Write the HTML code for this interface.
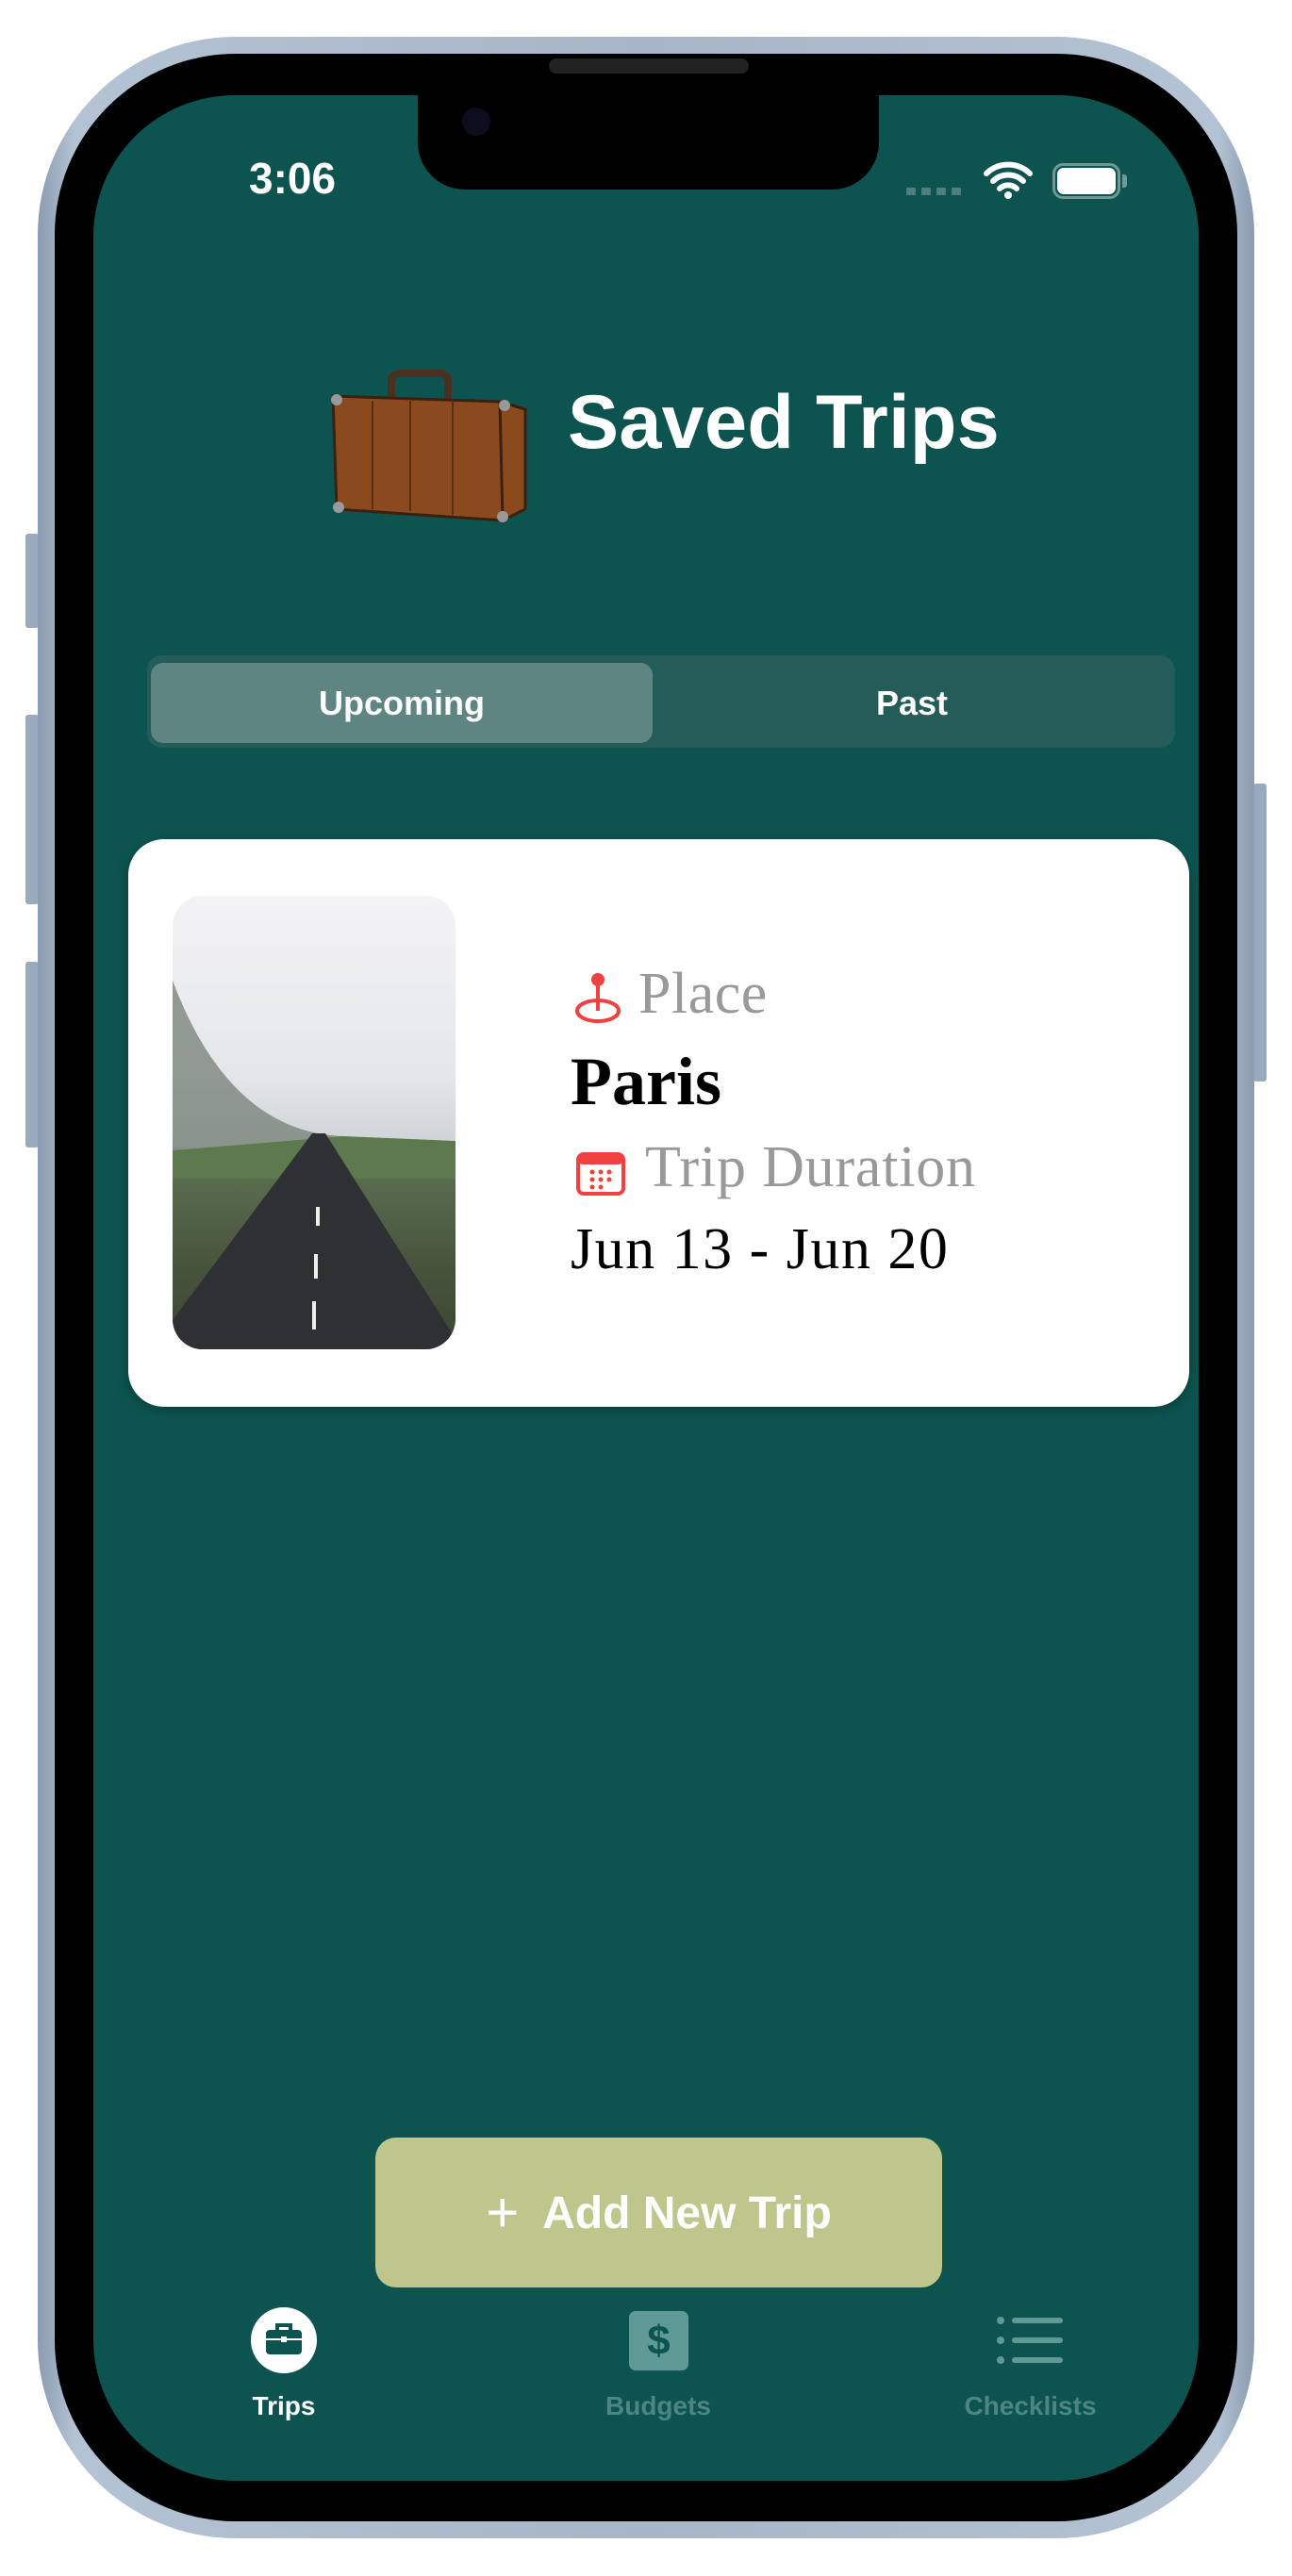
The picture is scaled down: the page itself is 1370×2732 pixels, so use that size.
<!DOCTYPE html>
<html><head><meta charset="utf-8"><style>
*{margin:0;padding:0;box-sizing:border-box}
body{width:1370px;height:2732px;background:#fff;position:relative;overflow:hidden;font-family:"Liberation Sans",sans-serif}
.abs{position:absolute}
.frame{left:40px;top:39px;width:1290px;height:2653px;border-radius:210px;background:linear-gradient(90deg,#8a9bb0,#b4c3d4 3%,#a6b5c7 50%,#b4c3d4 97%,#8a9bb0)}
.bezel{left:58px;top:57px;width:1254px;height:2617px;border-radius:192px;background:#000}
.screen{left:99px;top:101px;width:1172px;height:2530px;border-radius:150px;background:#0d5450;overflow:hidden}
.notch{left:443px;top:90px;width:489px;height:111px;background:#000;border-radius:0 0 50px 50px}
.btn{background:#9aaabd;border-radius:3px}
.serif{font-family:"Liberation Serif",serif}
</style></head><body>
<div class="abs btn" style="left:27px;top:566px;width:14px;height:100px"></div>
<div class="abs btn" style="left:27px;top:758px;width:14px;height:201px"></div>
<div class="abs btn" style="left:27px;top:1020px;width:14px;height:197px"></div>
<div class="abs btn" style="left:1329px;top:831px;width:14px;height:316px"></div>
<div class="abs frame"></div>
<div class="abs bezel"></div>
<div class="abs screen"></div>
<div class="abs notch"></div>
<div class="abs" style="left:582px;top:62px;width:212px;height:16px;border-radius:8px;background:#222"></div>
<div class="abs" style="left:490px;top:114px;width:30px;height:30px;border-radius:50%;background:#0d0d20"></div>
<div class="abs" style="left:264px;top:162px;font-size:46px;font-weight:bold;color:#fff">3:06</div>
<div class="abs" style="left:961px;top:199px;width:58px;height:8px;background:repeating-linear-gradient(90deg,#4f7f7c 0 10px,transparent 10px 16px)"></div>
<svg class="abs" style="left:1042px;top:168px" width="54" height="44" viewBox="0 0 54 44"><path d="M4 16a33 33 0 0 1 46 0M11 24a23 23 0 0 1 32 0M18 32a13 13 0 0 1 18 0" stroke="#fff" stroke-width="6" fill="none" stroke-linecap="round"/><circle cx="27" cy="39" r="4" fill="#fff"/></svg>
<div class="abs" style="left:1116px;top:173px;width:72px;height:38px;border:3px solid #6f9996;border-radius:11px"></div>
<div class="abs" style="left:1121px;top:178px;width:62px;height:28px;background:#fff;border-radius:7px"></div>
<div class="abs" style="left:1190px;top:185px;width:5px;height:14px;background:#6f9996;border-radius:0 3px 3px 0"></div>
<!-- suitcase -->
<svg class="abs" style="left:345px;top:390px" width="225" height="165" viewBox="0 0 225 165"><path d="M70 35 V14 q0-8 10-8 h40 q10 0 10 8 V35" stroke="#4a3020" stroke-width="8" fill="none"/><path d="M8 30 L185 36 L212 44 L212 150 L188 162 L12 150 Z" fill="#8b4a1e" stroke="#3a2010" stroke-width="3"/><path d="M185 36 L188 162" stroke="#3a2010" stroke-width="3"/><path d="M50 35 V150 M90 35 V152 M135 36 V156" stroke="#5a2f10" stroke-width="2"/><circle cx="12" cy="34" r="6" fill="#999"/><circle cx="190" cy="40" r="6" fill="#999"/><circle cx="14" cy="148" r="6" fill="#999"/><circle cx="188" cy="158" r="6" fill="#999"/></svg>
<div class="abs" style="left:602px;top:402px;font-size:81px;font-weight:bold;color:#fff;letter-spacing:0.3px">Saved Trips</div>
<!-- segmented -->
<div class="abs" style="left:156px;top:695px;width:1090px;height:98px;border-radius:16px;background:#245c5a"></div>
<div class="abs" style="left:160px;top:703px;width:532px;height:85px;border-radius:13px;background:#5f8582;color:#fff;font-size:36px;font-weight:bold;text-align:center;line-height:85px">Upcoming</div>
<div class="abs" style="left:692px;top:703px;width:550px;height:85px;color:#fff;font-size:36px;font-weight:bold;text-align:center;line-height:85px">Past</div>
<!-- card -->
<div class="abs" style="left:136px;top:890px;width:1125px;height:602px;border-radius:38px;background:#fff;box-shadow:0 4px 14px rgba(0,0,0,.25)"></div>
<div class="abs" style="left:183px;top:950px;width:300px;height:481px;border-radius:32px;overflow:hidden;background:linear-gradient(180deg,#f3f3f5 0%,#e4e6ea 40%,#cfd3d6 55%,#5a6c4e 62%,#48563d 80%,#3c4533 100%)">
<svg width="300" height="481" viewBox="0 0 300 481"><path d="M0 90 Q60 250 180 255 L0 270Z" fill="#6c776c" opacity=".7"/><path d="M0 270 L180 255 L300 260 L300 300 L0 300Z" fill="#5d7a4e"/><path d="M148 252 L162 252 L300 470 L300 481 L0 481 L0 450Z" fill="#2f3033"/><path d="M154 330 v20 M152 380 v26 M150 430 v30" stroke="#eee" stroke-width="4"/></svg></div>
<svg class="abs" style="left:608px;top:1030px" width="52" height="56" viewBox="0 0 52 56"><circle cx="26" cy="9" r="7" fill="#f04040"/><path d="M26 14 V42" stroke="#f04040" stroke-width="4"/><ellipse cx="26" cy="42" rx="22" ry="11" stroke="#f04040" stroke-width="4" fill="none"/></svg>
<div class="abs serif" style="left:677px;top:1019px;font-size:62px;color:#999;letter-spacing:0.5px">Place</div>
<div class="abs serif" style="left:605px;top:1106px;font-size:72px;font-weight:bold;color:#000">Paris</div>
<svg class="abs" style="left:611px;top:1222px" width="52" height="46" viewBox="0 0 52 46"><rect x="2" y="2" width="48" height="42" rx="6" fill="none" stroke="#f04040" stroke-width="4"/><rect x="2" y="2" width="48" height="11" rx="5" fill="#f04040"/><g fill="#f04040"><circle cx="17" cy="21" r="2.5"/><circle cx="26" cy="21" r="2.5"/><circle cx="35" cy="21" r="2.5"/><circle cx="17" cy="29" r="2.5"/><circle cx="26" cy="29" r="2.5"/><circle cx="35" cy="29" r="2.5"/><circle cx="17" cy="37" r="2.5"/><circle cx="26" cy="37" r="2.5"/></g></svg>
<div class="abs serif" style="left:684px;top:1203px;font-size:62px;color:#999;letter-spacing:0.8px">Trip Duration</div>
<div class="abs serif" style="left:605px;top:1290px;font-size:62px;color:#000;letter-spacing:1.5px">Jun 13 - Jun 20</div>
<!-- add button -->
<div class="abs" style="left:398px;top:2267px;width:601px;height:159px;border-radius:22px;background:#bfc68b;color:#fff;font-size:48px;font-weight:bold;text-align:center;line-height:159px"><span style="font-weight:normal;font-size:60px;vertical-align:-4px">+</span>&nbsp; Add New Trip</div>
<!-- tabs -->
<div class="abs" style="left:266px;top:2447px;width:70px;height:70px;border-radius:50%;background:#fff"></div>
<svg class="abs" style="left:279px;top:2461px" width="44" height="40" viewBox="0 0 44 40"><path d="M15 10V5h14v5" stroke="#0d5450" stroke-width="4" fill="none"/><rect x="3" y="10" width="38" height="26" rx="4" fill="#0d5450"/><path d="M3 20h38" stroke="#fff" stroke-width="2"/><rect x="19" y="17" width="6" height="6" fill="#fff"/></svg>
<div class="abs" style="left:236px;top:2536px;width:130px;text-align:center;font-size:28px;font-weight:bold;color:#fff">Trips</div>
<div class="abs" style="left:667px;top:2451px;width:63px;height:63px;border-radius:7px;background:#5f9a96;color:#0d5450;font-size:44px;font-weight:bold;text-align:center;line-height:63px">$</div>
<div class="abs" style="left:618px;top:2536px;width:160px;text-align:center;font-size:28px;font-weight:bold;color:#4c8581">Budgets</div>
<svg class="abs" style="left:1057px;top:2455px" width="72" height="60" viewBox="0 0 72 60"><g fill="#5f9a96"><circle cx="4" cy="6" r="4"/><circle cx="4" cy="27" r="4"/><circle cx="4" cy="48" r="4"/><rect x="16" y="3" width="54" height="6" rx="3"/><rect x="16" y="24" width="54" height="6" rx="3"/><rect x="16" y="45" width="54" height="6" rx="3"/></g></svg>
<div class="abs" style="left:1000px;top:2536px;width:185px;text-align:center;font-size:28px;font-weight:bold;color:#4c8581">Checklists</div>
</body></html>
